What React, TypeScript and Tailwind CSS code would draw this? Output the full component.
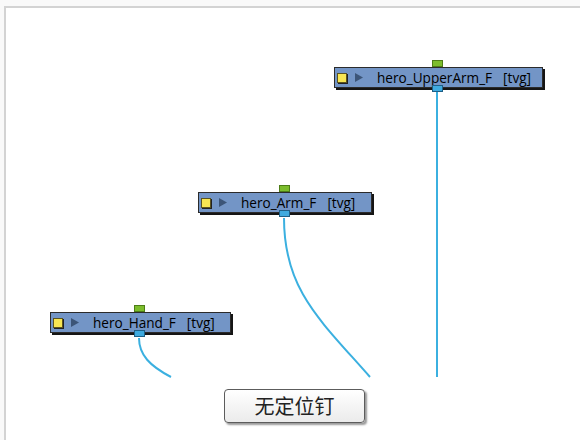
const Node = ({ x, y, w, name, port }: { x: number; y: number; w: number; name: string; port: number }) => {
    return (
        <div className="absolute" style={{ left: x, top: y, width: w }}>
            {/* in port */}
            <div
                className="absolute h-[7px] w-[11px] border border-[#4d7d17] bg-[#7cbd2c]"
                style={{ left: port, top: -7 }}
            />
            <div className="flex h-[21px] items-center border border-[#2b2b2b] bg-[#7395c6] shadow-[2px_2px_0_#151515] font-['Open_Sans',sans-serif] text-[13.6px] leading-none text-black">
                <div className="ml-[2px] h-[10px] w-[10px] border border-[#5b5320] bg-[#f7e653] shadow-[1px_1px_0_#222]" />
                <svg className="ml-[8px]" width="8" height="9" viewBox="0 0 8 9">
                    <path d="M0 0 L8 4.5 L0 9 Z" fill="#3c5578" />
                </svg>
                <span className="ml-[14px]">{name}</span>
                <span className="ml-[11px]">[tvg]</span>
            </div>
            {/* out port */}
            <div
                className="absolute h-[7px] w-[11px] border border-[#1f5f86] bg-[#3eaadf]"
                style={{ left: port, top: 18 }}
            />
        </div>
    )
}

export default function App() {
    return (
        <div className="h-[440px] w-[580px] bg-[#f9f9f9] pl-[4px] pt-[6px]">
            <div className="relative h-full w-full overflow-hidden border-l-2 border-t-2 border-[#d3d3d3] bg-white">
                {/* wires */}
                <svg className="absolute left-0 top-0" width="574" height="432" viewBox="6 8 574 432">
                    <g fill="none" stroke="#3bb0e0" strokeWidth="2">
                        <path d="M437 92 L437 377" />
                        <path d="M284 218 C 284 290, 320 320, 370 377" />
                        <path d="M139 338 C 139 355, 150 366, 171 377" />
                    </g>
                </svg>

                <Node x={328} y={59} w={209} name="hero_UpperArm_F" port={98} />
                <Node x={192} y={184} w={174} name="hero_Arm_F" port={81} />
                <Node x={44} y={304} w={181} name="hero_Hand_F" port={84} />

                {/* pin button */}
                <div className="absolute left-[218px] top-[381px] flex h-[34px] w-[141px] items-center justify-center rounded-[4px] border border-[#5c5c5c] bg-gradient-to-b from-white to-[#ebebeb] shadow-[2px_2px_2px_#9a9a9a]">
                    <span className="font-['Noto_Sans_CJK_SC',sans-serif] text-[20px] leading-none text-[#222]">
                        无定位钉
                    </span>
                </div>
            </div>
        </div>
    )
}
